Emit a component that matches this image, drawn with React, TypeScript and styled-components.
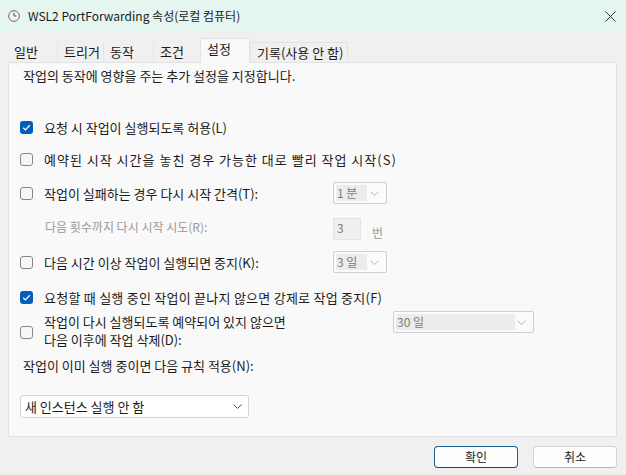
import React from 'react';
import styled, { createGlobalStyle } from 'styled-components';

const GlobalStyle = createGlobalStyle`
  html, body {
    margin: 0;
    padding: 0;
    background: #f0f0f0;
  }
  body {
    font-family: "Noto Sans CJK KR", "Noto Sans", sans-serif;
    font-size: 13px;
    color: #1b1b1b;
  }
`;

const tabs = [
  { label: '일반', width: 49 },
  { label: '트리거', width: 46 },
  { label: '동작', width: 50 },
  { label: '조건', width: 47 },
  { label: '설정', width: 50, active: true },
  { label: '기록(사용 안 함)', width: 98 },
];

const ClockIcon = () => (
  <svg width="12" height="12" viewBox="0 0 12 12">
    <circle cx="6" cy="6" r="5.3" fill="#f4f4f4" stroke="#6a6a6a" strokeWidth="1" />
    <path d="M6 2.8V6h2.4" fill="none" stroke="#4a4a4a" strokeWidth="1" />
  </svg>
);

const CloseIcon = () => (
  <svg width="11" height="11" viewBox="0 0 11 11">
    <path d="M0.5 0.5l10 10M10.5 0.5l-10 10" stroke="#333" strokeWidth="1" />
  </svg>
);

const Chevron = ({ color = '#b5b5b5' }: { color?: string }) => (
  <svg width="9" height="5" viewBox="0 0 9 5">
    <path d="M0.5 0.5l4 4 4-4" fill="none" stroke={color} strokeWidth="1" />
  </svg>
);

const CheckBox = ({ checked }: { checked?: boolean }) => (
  <BoxWrap>
    {checked ? (
      <svg width="13" height="13" viewBox="0 0 13 13">
        <rect x="0" y="0" width="13" height="13" rx="3" fill="#005fb8" />
        <path d="M3.2 6.8l2.2 2.1 4.4-4.6" fill="none" stroke="#fff" strokeWidth="1.3" />
      </svg>
    ) : (
      <svg width="13" height="13" viewBox="0 0 13 13">
        <rect x="0.5" y="0.5" width="12" height="12" rx="2.5" fill="#f7f7f7" stroke="#858585" />
      </svg>
    )}
  </BoxWrap>
);

const Combo = ({ value, width, valueWidth }: { value: string; width: number; valueWidth: number }) => (
  <ComboBox style={{ width }}>
    <ComboValue style={{ width: valueWidth }}>{value}</ComboValue>
    <Chevron />
  </ComboBox>
);

const App: React.FC = () => {
  return (
    <>
      <GlobalStyle />
      <Window>
        <TitleBar>
          <TitleLeft>
            <ClockIcon />
            <TitleText>WSL2 PortForwarding 속성(로컬 컴퓨터)</TitleText>
          </TitleLeft>
          <CloseIcon />
        </TitleBar>

        <Body>
          <TabStrip>
            {tabs.map((t, i) => (
              <Tab key={t.label} $active={t.active} $last={i === tabs.length - 1} style={{ width: t.width }}>
                {t.label}
              </Tab>
            ))}
          </TabStrip>

          <Panel>
            <Description>작업의 동작에 영향을 주는 추가 설정을 지정합니다.</Description>

            <Row $mt={32}>
              <CheckBox checked />
              <Label>요청 시 작업이 실행되도록 허용(L)</Label>
            </Row>

            <Row $mt={10}>
              <CheckBox />
              <Label $spacing={1}>예약된 시작 시간을 놓친 경우 가능한 대로 빨리 작업 시작(S)</Label>
            </Row>

            <Row $mt={12}>
              <CheckBox />
              <Label $width={289}>작업이 실패하는 경우 다시 시작 간격(T):</Label>
              <Combo value="1 분" width={54} valueWidth={30} />
            </Row>

            <SubRow>
              <Label $width={288} $muted>다음 횟수까지 다시 시작 시도(R):</Label>
              <NumberBox>3</NumberBox>
              <Unit>번</Unit>
            </SubRow>

            <Row $mt={11}>
              <CheckBox />
              <Label $width={289}>다음 시간 이상 작업이 실행되면 중지(K):</Label>
              <Combo value="3 일" width={54} valueWidth={30} />
            </Row>

            <Row $mt={13}>
              <CheckBox checked />
              <Label $spacing={0.25}>요청할 때 실행 중인 작업이 끝나지 않으면 강제로 작업 중지(F)</Label>
            </Row>

            <DeleteRow>
              <CheckBox />
              <TwoLineLabel>
                <span>작업이 다시 실행되도록 예약되어 있지 않으면</span>
                <span>다음 이후에 작업 삭제(D):</span>
              </TwoLineLabel>
              <Combo value="30 일" width={141} valueWidth={118} />
            </DeleteRow>

            <Description $mt={9}>작업이 이미 실행 중이면 다음 규칙 적용(N):</Description>

            <Select>
              <span>새 인스턴스 실행 안 함</span>
              <Chevron color="#555" />
            </Select>
          </Panel>

          <Footer>
            <Button $primary>확인</Button>
            <Button>취소</Button>
          </Footer>
        </Body>
      </Window>
    </>
  );
};

export default App;

const Window = styled.div`
  width: 626px;
  height: 475px;
  display: flex;
  flex-direction: column;
  background: #f0f0f0;
  overflow: hidden;
`;

const TitleBar = styled.div`
  height: 32px;
  flex-shrink: 0;
  background: #e5f5f0;
  display: flex;
  align-items: center;
  justify-content: space-between;
  padding: 0 10px 0 8px;
  box-sizing: border-box;
`;

const TitleLeft = styled.div`
  display: flex;
  align-items: center;
  gap: 8px;

  svg {
    display: block;
  }
`;

const TitleText = styled.span`
  font-size: 12px;
  line-height: 16px;
  color: #1b1b1b;
`;

const Body = styled.div`
  flex: 1;
  display: flex;
  flex-direction: column;
  padding: 0 9px 0 8px;
`;

const TabStrip = styled.div`
  display: flex;
  align-items: flex-end;
  height: 24px;
  margin-top: 6px;
  position: relative;
  z-index: 1;
`;

const Tab = styled.div<{ $active?: boolean; $last?: boolean }>`
  box-sizing: border-box;
  height: ${(p) => (p.$active ? 25 : 20)}px;
  margin-bottom: ${(p) => (p.$active ? '-1px' : '0')};
  padding: ${(p) => (p.$active ? '2px' : '0')} 0 0 6px;
  line-height: ${(p) => (p.$active ? 16 : 20)}px;
  font-size: 13px;
  color: #1b1b1b;
  white-space: nowrap;
  background: ${(p) => (p.$active ? '#f9f9f9' : '#f0f0f0')};
  border-left: 1px solid ${(p) => (p.$active ? '#e2e2e2' : '#e6e6e6')};
  border-right: ${(p) => (p.$active || p.$last ? '1px solid #e2e2e2' : 'none')};
  border-top: ${(p) => (p.$active || p.$last ? '1px solid #e2e2e2' : 'none')};

  &:first-child {
    border-left: none;
  }
`;

const Panel = styled.div`
  box-sizing: border-box;
  height: 375px;
  flex-shrink: 0;
  background: #f9f9f9;
  border: 1px solid #e2e2e2;
  padding: 5px 11px 0 11px;
  display: flex;
  flex-direction: column;
  align-items: flex-start;
`;

const Description = styled.div<{ $mt?: number }>`
  margin-top: ${(p) => p.$mt ?? 0}px;
  padding-left: 3px;
  line-height: 16px;
  color: #1b1b1b;
`;

const Row = styled.div<{ $mt?: number }>`
  display: flex;
  align-items: center;
  height: 22px;
  margin-top: ${(p) => p.$mt ?? 0}px;
`;

const SubRow = styled.div`
  display: flex;
  align-items: flex-start;
  height: 22px;
  margin-top: 14px;
  padding-left: 25px;
`;

const DeleteRow = styled.div`
  display: flex;
  align-items: flex-start;
  margin-top: 3px;

  & > div:first-child {
    align-self: center;
    margin-top: 4px;
  }
`;

const BoxWrap = styled.div`
  width: 13px;
  height: 13px;
  margin-right: 11px;
  flex-shrink: 0;

  svg {
    display: block;
  }
`;

const Label = styled.div<{ $width?: number; $muted?: boolean; $spacing?: number }>`
  ${(p) => (p.$width ? `width: ${p.$width}px;` : '')}
  flex-shrink: 0;
  line-height: 17px;
  font-size: ${(p) => (p.$muted ? 12 : 13)}px;
  letter-spacing: ${(p) => p.$spacing ?? 0}px;
  color: ${(p) => (p.$muted ? '#9a9a9a' : '#1b1b1b')};
  white-space: nowrap;
`;

const TwoLineLabel = styled.div`
  width: 349px;
  flex-shrink: 0;
  padding-top: 2px;
  display: flex;
  flex-direction: column;
  line-height: 18px;
  white-space: nowrap;
`;

const ComboBox = styled.div`
  box-sizing: border-box;
  height: 22px;
  border: 1px solid #cfcfcf;
  border-radius: 2px;
  background: #fbfbfb;
  display: flex;
  align-items: center;
  justify-content: space-between;
  padding: 0 7px 0 2px;
  font-size: 12px;

  svg {
    display: block;
  }
`;

const ComboValue = styled.div`
  height: 16px;
  line-height: 16px;
  background: #ececec;
  color: #7a7a7a;
  padding-left: 1px;
`;

const NumberBox = styled.div`
  box-sizing: border-box;
  width: 28px;
  height: 22px;
  background: #efefef;
  border: 1px solid #e4e4e4;
  color: #7a7a7a;
  padding: 1px 0 0 3px;
  line-height: 16px;
  font-size: 12px;
`;

const Unit = styled.div`
  margin: 7px 0 0 11px;
  line-height: 16px;
  font-size: 12px;
  color: #9a9a9a;
`;

const Select = styled.div`
  box-sizing: border-box;
  margin-top: 21px;
  width: 229px;
  height: 23px;
  background: #ffffff;
  border: 1px solid #d4d4d4;
  border-radius: 3px;
  display: flex;
  align-items: center;
  justify-content: space-between;
  padding: 0 6px 0 4px;
  line-height: 16px;
  color: #1b1b1b;

  svg {
    display: block;
  }
`;

const Footer = styled.div`
  flex: 1;
  display: flex;
  justify-content: flex-end;
  align-items: flex-start;
  gap: 15px;
  padding-top: 9px;
`;

const Button = styled.button<{ $primary?: boolean }>`
  box-sizing: border-box;
  width: 84px;
  height: 22px;
  font-family: inherit;
  font-size: 12px;
  line-height: 16px;
  color: #1b1b1b;
  background: #fdfdfd;
  border: 1px solid ${(p) => (p.$primary ? '#1d5f8a' : '#d3d3d3')};
  border-bottom-color: ${(p) => (p.$primary ? '#0f4a70' : '#b8b8b8')};
  border-radius: 4px;
  padding: 0;
  cursor: default;
`;
